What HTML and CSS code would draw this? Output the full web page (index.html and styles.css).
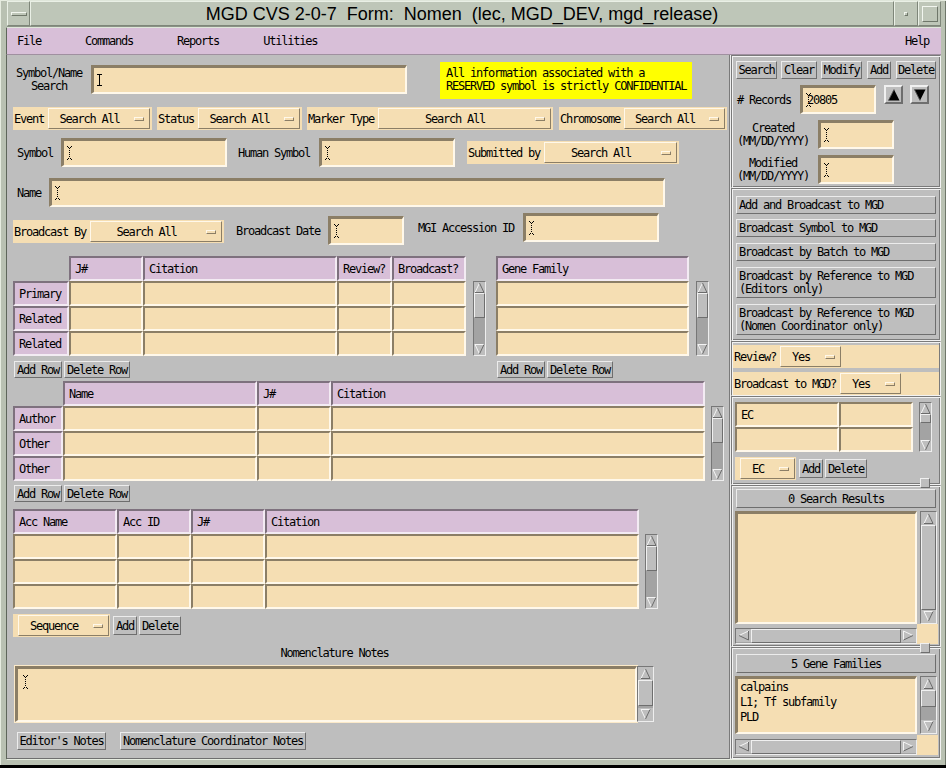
FILE: index.html
```html
<!DOCTYPE html>
<html><head><meta charset="utf-8"><title>MGD Nomen</title><link rel="stylesheet" href="styles.css"></head>
<body>
<svg class="defs" aria-hidden="true">
 <symbol id="su" viewBox="0 0 11 11"><path d="M5.5 1L1 10.5H10Z" fill="#bebebe"/><path d="M1 10.5L5.5 1" stroke="#f4f4f4" fill="none"/><path d="M5.5 1L10 10.5H1" stroke="#6a6a6a" fill="none"/></symbol>
 <symbol id="sd" viewBox="0 0 11 11"><path d="M1 0.5H10L5.5 10Z" fill="#bebebe"/><path d="M5.5 10L1 0.5H10" stroke="#f4f4f4" fill="none"/><path d="M10 0.5L5.5 10" stroke="#6a6a6a" fill="none"/></symbol>
 <symbol id="sl" viewBox="0 0 11 11"><path d="M1 5.5L10.5 1V10Z" fill="#bebebe"/><path d="M10.5 1L1 5.5" stroke="#f4f4f4" fill="none"/><path d="M1 5.5L10.5 10V1" stroke="#6a6a6a" fill="none"/></symbol>
 <symbol id="sr" viewBox="0 0 11 11"><path d="M10 5.5L0.5 1V10Z" fill="#bebebe"/><path d="M0.5 10V1L10 5.5" stroke="#f4f4f4" fill="none"/><path d="M10 5.5L0.5 10" stroke="#6a6a6a" fill="none"/></symbol>
 <symbol id="bu" viewBox="0 0 13 13"><path d="M6.5 0.5L0.5 12.5H12.5Z" fill="#000"/><path d="M6.5 0.5L0.5 12.5" stroke="#555" fill="none"/></symbol>
 <symbol id="bd" viewBox="0 0 13 13"><path d="M0.5 0.5H12.5L6.5 12.5Z" fill="#000"/><path d="M0.5 0.5L6.5 12.5" stroke="#555" fill="none"/></symbol>
 <symbol id="ibd" viewBox="0 0 5 14"><path d="M0 0.5h1M4 0.5h1M1 1.5h1M3 1.5h1M1 12.5h1M3 12.5h1M0 13.5h1M4 13.5h1" stroke="#000" fill="none"/><path d="M2.5 2v10" stroke="#000" stroke-dasharray="1 1" fill="none"/></symbol>
 <symbol id="ibs" viewBox="0 0 5 12"><path d="M0 0.5h5M2.5 1v10M0 11.5h5" stroke="#000" fill="none"/></symbol>
</svg>
<div class="win">
 <div class="titlebar">
  <div class="tbb tb-menu"><span class="tdash"></span></div>
  <div class="tb-title">MGD CVS 2-0-7&nbsp; Form:&nbsp; Nomen&nbsp; (lec, MGD_DEV, mgd_release)</div>
  <div class="tbb tb-min"><span class="tdot"></span></div>
  <div class="tbb tb-max"><span class="tsq"></span></div>
 </div>
 <div class="menubar">
  <span class="mi m-file">File</span><span class="mi m-cmd">Commands</span><span class="mi m-rep">Reports</span><span class="mi m-util">Utilities</span><span class="mi m-help">Help</span>
 </div>
 <div class="main">
  <div class="left">
   <div class="row r1">
    <div class="lbl l-ssearch">Symbol/Name<br>Search</div>
    <div class="fld f-ssearch"><svg class="curs"><use href="#ibs"/></svg></div>
    <div class="notice">All information associated with a<br>RESERVED symbol is strictly CONFIDENTIAL</div>
   </div>
   <div class="row r2">
    <div class="opt g-event"><span class="ol">Event</span><div class="ob"><span class="t">Search All</span><span class="ind"></span></div></div>
    <div class="opt g-status"><span class="ol">Status</span><div class="ob"><span class="t">Search All</span><span class="ind"></span></div></div>
    <div class="opt g-marker"><span class="ol">Marker Type</span><div class="ob"><span class="t">Search All</span><span class="ind"></span></div></div>
    <div class="opt g-chrom"><span class="ol">Chromosome</span><div class="ob"><span class="t">Search All</span><span class="ind"></span></div></div>
   </div>
   <div class="row r3">
    <div class="lbl l-symbol">Symbol</div>
    <div class="fld f-symbol"><svg class="cur"><use href="#ibd"/></svg></div>
    <div class="lbl l-human">Human Symbol</div>
    <div class="fld f-human"><svg class="cur"><use href="#ibd"/></svg></div>
    <div class="opt g-subm"><span class="ol">Submitted by</span><div class="ob"><span class="t">Search All</span><span class="ind"></span></div></div>
   </div>
   <div class="row r4">
    <div class="lbl l-name">Name</div>
    <div class="fld f-name"><svg class="cur"><use href="#ibd"/></svg></div>
   </div>
   <div class="row r5">
    <div class="opt g-bby"><span class="ol">Broadcast By</span><div class="ob"><span class="t">Search All</span><span class="ind"></span></div></div>
    <div class="lbl l-bdate">Broadcast Date</div>
    <div class="fld f-bdate"><svg class="cur"><use href="#ibd"/></svg></div>
    <div class="lbl l-mgi">MGI Accession ID</div>
    <div class="fld f-mgi"><svg class="cur"><use href="#ibd"/></svg></div>
   </div>

   <div class="row tb1">
    <div class="tcol c-t1">
     <div class="tbl t1">
      <div class="corner"></div><div class="hc">J#</div><div class="hc">Citation</div><div class="hc">Review?</div><div class="hc">Broadcast?</div>
      <div class="hc">Primary</div><div class="c"></div><div class="c"></div><div class="c"></div><div class="c"></div>
      <div class="hc">Related</div><div class="c"></div><div class="c"></div><div class="c"></div><div class="c"></div>
      <div class="hc">Related</div><div class="c"></div><div class="c"></div><div class="c"></div><div class="c"></div>
     </div>
     <div class="brow"><div class="btn b-addrow">Add Row</div><div class="btn b-delrow">Delete Row</div></div>
    </div>
    <div class="vsb vs-t1"><div class="sa"><svg><use href="#su"/></svg></div><div class="sth"></div><div class="str"></div><div class="sa"><svg><use href="#sd"/></svg></div></div>
    <div class="tcol c-gf">
     <div class="tbl tgf">
      <div class="hc">Gene Family</div><div class="c"></div><div class="c"></div><div class="c"></div>
     </div>
     <div class="brow"><div class="btn b-addrow">Add Row</div><div class="btn b-delrow">Delete Row</div></div>
    </div>
    <div class="vsb vs-gf"><div class="sa"><svg><use href="#su"/></svg></div><div class="sth"></div><div class="str"></div><div class="sa"><svg><use href="#sd"/></svg></div></div>
   </div>

   <div class="row tb2">
    <div class="tcol c-t2">
     <div class="tbl t2">
      <div class="corner"></div><div class="hc">Name</div><div class="hc">J#</div><div class="hc">Citation</div>
      <div class="hc">Author</div><div class="c"></div><div class="c"></div><div class="c"></div>
      <div class="hc">Other</div><div class="c"></div><div class="c"></div><div class="c"></div>
      <div class="hc">Other</div><div class="c"></div><div class="c"></div><div class="c"></div>
     </div>
     <div class="brow br2"><div class="btn b-addrow">Add Row</div><div class="btn b-delrow">Delete Row</div></div>
    </div>
    <div class="vsb vs-t2"><div class="sa"><svg><use href="#su"/></svg></div><div class="sth"></div><div class="str"></div><div class="sa"><svg><use href="#sd"/></svg></div></div>
   </div>

   <div class="row tb3">
    <div class="tbl t3">
     <div class="hc">Acc Name</div><div class="hc">Acc ID</div><div class="hc">J#</div><div class="hc">Citation</div>
     <div class="c"></div><div class="c"></div><div class="c"></div><div class="c"></div>
     <div class="c"></div><div class="c"></div><div class="c"></div><div class="c"></div>
     <div class="c"></div><div class="c"></div><div class="c"></div><div class="c"></div>
    </div>
    <div class="vsb vs-t3"><div class="sa"><svg><use href="#su"/></svg></div><div class="sth"></div><div class="str"></div><div class="sa"><svg><use href="#sd"/></svg></div></div>
   </div>

   <div class="row rseq">
    <div class="opt g-seq"><div class="ob"><span class="t">Sequence</span><span class="ind"></span></div></div>
    <div class="btn b-sadd">Add</div>
    <div class="btn b-sdel">Delete</div>
   </div>
   <div class="notes-lbl">Nomenclature Notes</div>
   <div class="row rnotes">
    <div class="ta"><svg class="cur"><use href="#ibd"/></svg></div>
    <div class="vsb vs-ta"><div class="sa"><svg><use href="#su"/></svg></div><div class="sth"></div><div class="str"></div><div class="sa"><svg><use href="#sd"/></svg></div></div>
   </div>
   <div class="row rbot">
    <div class="btn b-ed">Editor's Notes</div>
    <div class="btn b-nc">Nomenclature Coordinator Notes</div>
   </div>
  </div>

  <div class="right">
   <div class="sec s1">
    <div class="row rbtns">
     <div class="btn b-search">Search</div><div class="btn b-clear">Clear</div><div class="btn b-modify">Modify</div><div class="btn b-add">Add</div><div class="btn b-delete">Delete</div>
    </div>
    <div class="row rrec">
     <div class="lbl l-rec"># Records</div>
     <div class="fld f-rec"><svg class="cur"><use href="#ibd"/></svg><span class="recv">20805</span></div>
     <div class="abtn ab-up"><svg><use href="#bu"/></svg></div>
     <div class="abtn ab-dn"><svg><use href="#bd"/></svg></div>
    </div>
    <div class="row rdate">
     <div class="lbl l-date">Created<br>(MM/DD/YYYY)</div>
     <div class="fld f-date"><svg class="cur"><use href="#ibd"/></svg></div>
    </div>
    <div class="row rdate">
     <div class="lbl l-date">Modified<br>(MM/DD/YYYY)</div>
     <div class="fld f-date"><svg class="cur"><use href="#ibd"/></svg></div>
    </div>
   </div>
   <div class="sec s2">
    <div class="btn wb wb1">Add and Broadcast to MGD</div>
    <div class="btn wb wb2">Broadcast Symbol to MGD</div>
    <div class="btn wb wb3">Broadcast by Batch to MGD</div>
    <div class="btn wb wb4">Broadcast by Reference to MGD<br>(Editors only)</div>
    <div class="btn wb wb4">Broadcast by Reference to MGD<br>(Nomen Coordinator only)</div>
   </div>
   <div class="sec s3">
    <div class="opt g-review"><span class="ol">Review?</span><div class="ob"><span class="t">Yes</span><span class="ind"></span></div></div>
    <div class="opt g-bmgd"><span class="ol">Broadcast to MGD?</span><div class="ob"><span class="t">Yes</span><span class="ind"></span></div></div>
   </div>
   <div class="sec s4">
    <div class="row rec-tbl">
     <div class="tbl tec">
      <div class="c ct">EC</div><div class="c"></div>
      <div class="c"></div><div class="c"></div>
     </div>
     <div class="vsb vs-ec"><div class="sa"><svg><use href="#su"/></svg></div><div class="sth"></div><div class="str"></div><div class="sa"><svg><use href="#sd"/></svg></div></div>
    </div>
    <div class="row rec-opt">
     <div class="opt g-ec"><div class="ob"><span class="t">EC</span><span class="ind"></span></div></div>
     <div class="btn b-eadd">Add</div>
     <div class="btn b-edel">Delete</div>
    </div>
   </div>
   <div class="sec s5">
    <div class="btn pb pb1">0 Search Results</div>
    <div class="sw sw-res">
     <div class="list"></div>
     <div class="vsb rvsb vs-res"><div class="sa"><svg><use href="#su"/></svg></div><div class="sth"></div><div class="sa"><svg><use href="#sd"/></svg></div></div>
     <div class="hsb"><div class="sa"><svg><use href="#sl"/></svg></div><div class="sth"></div><div class="sa"><svg><use href="#sr"/></svg></div></div>
     <div class="swc"></div>
    </div>
   </div>
   <div class="sec s6">
    <div class="btn pb pb2">5 Gene Families</div>
    <div class="sw sw-gf">
     <div class="list">calpains<br>L1; Tf subfamily<br>PLD</div>
     <div class="vsb rvsb vs-gfl"><div class="sa"><svg><use href="#su"/></svg></div><div class="sth"></div><div class="str"></div><div class="sa"><svg><use href="#sd"/></svg></div></div>
     <div class="hsb"><div class="sa"><svg><use href="#sl"/></svg></div><div class="sth"></div><div class="sa"><svg><use href="#sr"/></svg></div></div>
     <div class="swc"></div>
    </div>
   </div>
   <div class="sash sash1"></div>
   <div class="sash sash2"></div>
  </div>
 </div>
 <div class="fbot"></div>
</div>
</body></html>
```

FILE: styles.css
```css
*{box-sizing:border-box}
html,body{margin:0;padding:0;background:#000}
body{width:946px;height:768px;overflow:hidden}
.defs{width:0;height:0;overflow:hidden;display:block}

.win{width:946px;height:765px;background:#b9c1b2;padding:0 5px 0 6px;display:flex;flex-direction:column;
 font-family:"DejaVu Sans Mono",monospace;font-size:12px;letter-spacing:-1.22px;color:#000;
 box-shadow:inset 1px 1px 0 #e6ece0,inset -1px 0 0 #6f776a}

/* title bar */
.titlebar{flex:none;height:27px;display:flex;margin-left:1px;background:#bec6b8;border-top:1px solid #dfe6da;border-bottom:1px solid #8a9285}
.tbb{flex:none;display:flex;align-items:center;justify-content:center;border:1px solid;border-color:#eaf0e6 #7e8679 #7e8679 #eaf0e6}
.tb-menu{width:23px}
.tb-min{width:24px}
.tb-max{width:23px}
.tb-title{flex:1;text-align:center;font-family:"Liberation Sans",Arial,sans-serif;font-size:18px;letter-spacing:0;line-height:24px;color:#000;
 border:1px solid;border-color:#eaf0e6 #7e8679 #7e8679 #eaf0e6;white-space:nowrap}
.tdash{width:16px;height:4px;border:1px solid;border-color:#f2f6ef #6f776a #6f776a #f2f6ef}
.tdot{width:4px;height:4px;border:1px solid;border-color:#f2f6ef #6f776a #6f776a #f2f6ef}
.tsq{width:16px;height:16px;border:1px solid;border-color:#f2f6ef #6f776a #6f776a #f2f6ef}

/* menu bar */
.menubar{flex:none;height:28px;display:flex;align-items:center;background:#d8bfd8;border-left:1px solid #5e665a;border-top:1px solid #dfe6da;border-bottom:1px solid #a090a0;padding-left:10px}
.mi{white-space:nowrap}
.m-cmd,.m-rep,.m-util{margin-left:44px}
.m-help{margin-left:auto;margin-right:12px}

/* main */
.main{flex:none;height:704px;display:flex;border-left:1px solid #5e665a}
.left{flex:none;width:723px;display:flex;flex-direction:column;background:#bebebe;border-right:1px solid #7a7a7a;border-bottom:1px solid #6e6e6e}
.right{flex:none;width:211px;position:relative;background:#bebebe;display:flex;flex-direction:column;border-left:1px solid #eeeeee}
.fbot{flex:none;height:6px;margin-left:1px;border-top:1px solid #e6ece0}

.row{display:flex;align-items:center;flex:none}
.lbl{flex:none;white-space:nowrap}

/* fields */
.fld{flex:none;display:flex;align-items:center;background:#f5deb3;border-style:solid;border-width:3px 2px 2px 3px;border-color:#8b7e66 #fff8ea #fff8ea #8b7e66;padding-left:3px}
.cur{flex:none;width:5px;height:14px}
.curs{flex:none;width:5px;height:12px}
.recv{margin-left:-4px}

/* option menus */
.opt{flex:none;display:flex;align-items:center;height:23px;background:#f5deb3;padding:0 2px 0 1px}
.ol{flex:none;white-space:nowrap}
.ob{flex:none;height:21px;display:flex;align-items:center;border:1px solid;border-color:#fff8ea #8b7e66 #8b7e66 #fff8ea}
.ob .t{flex:1;text-align:center;white-space:nowrap}
.ind{flex:none;width:10px;height:4px;margin:0 5px 0 4px;border:1px solid;border-color:#fff8ea #8b7e66 #8b7e66 #fff8ea}

/* buttons */
.btn{flex:none;display:flex;align-items:center;justify-content:center;background:#bebebe;border:1px solid;border-color:#ececec #6e6e6e #6e6e6e #ececec;white-space:nowrap}

/* tables */
.tbl{display:grid;grid-auto-rows:25px;flex:none}
.hc{background:#d8bfd8;border:2px solid;border-color:#7e717e #f3ebf3 #f3ebf3 #7e717e;padding-left:4px;display:flex;align-items:center;white-space:nowrap;overflow:hidden}
.c{background:#f5deb3;border:2px solid;border-color:#8b7e66 #fff8ea #fff8ea #8b7e66}
.ct{display:flex;align-items:center;padding-left:4px}
.t1{grid-template-columns:56px 74px 194px 55px 74px}
.tgf{grid-template-columns:193px}
.t2{grid-template-columns:50px 194px 74px 374px}
.t3{grid-template-columns:104px 74px 74px 374px;margin-left:6px}
.tec{grid-template-columns:104px 74px}
.tcol{flex:none;display:flex;flex-direction:column}
.brow{display:flex;gap:2px;margin-top:5px;margin-left:1px}
.br2{margin-top:4px}
.b-addrow{width:48px;height:17px}
.b-delrow{width:66px;height:17px}

/* scrollbars */
.vsb{flex:none;display:flex;flex-direction:column;border:1px solid;border-color:#777777 #eeeeee #eeeeee #777777;background:#a3a3a3}
.hsb{display:flex;border:1px solid;border-color:#777777 #eeeeee #eeeeee #777777;background:#a3a3a3}
.sa{flex:none;width:11px;height:11px;display:flex;align-items:center;justify-content:center;background:#bebebe}
.sa svg{width:11px;height:11px;display:block}
.sth{flex:none;height:25px;background:#bebebe;border:1px solid;border-color:#f0f0f0 #6e6e6e #6e6e6e #f0f0f0}
.str{flex:1}
.vs-t1,.vs-gf{width:13px;height:75px}
.vs-t1{margin-left:7px}
.vs-gf{margin-left:7px}
.tb1 .vsb{align-self:flex-start;margin-top:25px}
.tb2 .vsb{align-self:flex-start;margin-top:25px}
.tb3 .vsb{align-self:flex-start;margin-top:25px}
.c-gf{margin-left:10px}
.vs-t2{width:13px;height:75px;margin-left:6px}
.vs-t3{width:13px;height:75px;margin-left:6px}

/* left rows */
.r1{margin-top:7px;height:37px}
.l-ssearch{margin-left:9px;width:66px;text-align:center;line-height:13px;margin-top:-2px}
.f-ssearch{width:316px;height:29px;margin-left:9px;align-self:flex-start;margin-top:3px}
.notice{flex:none;margin-left:33px;width:252px;height:37px;background:#ffff00;padding:5px 0 0 6px;line-height:13px;white-space:nowrap}

.r2{margin-top:8px;height:23px}
.g-event{margin-left:6px}.g-event .ol{width:34px}.g-event .ob{width:102px}
.g-status{margin-left:5px}.g-status .ol{width:40px}.g-status .ob{width:102px}
.g-marker{margin-left:5px}.g-marker .ol{width:70px}.g-marker .ob{width:173px}
.g-chrom{margin-left:6px}.g-chrom .ol{width:64px}.g-chrom .ob{width:101px}

.r3{margin-top:8px;height:29px}
.l-symbol{margin-left:10px;width:44px}
.f-symbol{width:166px;height:29px}
.l-human{margin-left:11px;width:81px}
.f-human{width:136px;height:29px}
.g-subm{margin-left:12px}.g-subm .ol{width:76px}.g-subm .ob{width:133px}

.r4{margin-top:11px;height:29px}
.l-name{margin-left:10px;width:32px}
.f-name{width:616px;height:29px}

.r5{margin-top:6px;height:32px;align-items:flex-start}
.g-bby{margin-left:6px;margin-top:7px}.g-bby .ol{width:76px}.g-bby .ob{width:132px}
.l-bdate{margin-left:12px;width:92px;height:29px;margin-top:3px;display:flex;align-items:center}
.f-bdate{width:76px;height:29px;margin-top:3px}
.l-mgi{margin-left:14px;width:105px;height:29px;display:flex;align-items:center}
.f-mgi{width:136px;height:29px}

.tb1{margin-top:11px;align-items:flex-start}
.c-t1{margin-left:6px}
.tb2{margin-top:3px;align-items:flex-start}
.c-t2{margin-left:6px}
.tb3{margin-top:7px;align-items:flex-start}

.rseq{margin-top:5px;height:23px}
.g-seq{margin-left:6px;padding-left:5px;padding-right:1px}.g-seq .ob{width:91px}
.b-sadd{margin-left:3px;width:24px;height:19px}
.b-sdel{margin-left:2px;width:42px;height:19px}
.notes-lbl{flex:none;margin:9px 0 0 8px;width:639px;text-align:center;line-height:14px}
.rnotes{margin-top:6px;margin-left:8px;align-items:stretch;height:56px}
.ta{flex:none;width:622px;height:56px;background:#f5deb3;border-style:solid;border-width:3px 2px 2px 3px;border-color:#8b7e66 #fff8ea #fff8ea #8b7e66;padding:6px 0 0 5px;box-shadow:0 0 0 1px #fbe9c8}
.ta .cur{display:block}
.vs-ta{width:17px;height:56px;margin-left:0}
.vs-ta .sa,.rvsb .sa,.hsb .sa{width:15px;height:13px}
.vs-ta .sth{height:26px}
.rbot{margin-top:10px;margin-left:10px;height:18px}
.b-ed{width:89px;height:18px}
.b-nc{margin-left:14px;width:186px;height:18px}

/* right panel */
.sec{flex:none;border:1px solid;border-color:#7a7a7a #f2f2f2 #f2f2f2 #7a7a7a;box-shadow:inset 1px 1px 0 #f2f2f2,inset -1px -1px 0 #7a7a7a;display:flex;flex-direction:column}
.s1{height:133px;padding-left:4px}
.s2{height:153px;padding-left:4px}
.s3{height:55px}
.s4{height:89px}
.s5{height:162px}
.s6{height:112px}

.rbtns{margin-top:5px;height:18px}
.rbtns .btn{height:18px}
.b-search{width:41px}
.b-clear{width:36px;margin-left:4px}
.b-modify{width:41px;margin-left:4px}
.b-add{width:24px;margin-left:5px}
.b-delete{width:40px;margin-left:5px}
.rrec{margin-top:6px;height:29px;align-items:flex-start}
.l-rec{margin-left:1px;width:63px;height:29px;display:flex;align-items:center}
.f-rec{width:76px;height:29px}
.abtn{flex:none;width:19px;height:19px;background:#bebebe;border:2px solid;border-color:#f0f0f0 #6e6e6e #6e6e6e #f0f0f0;display:flex;align-items:center;justify-content:center}
.abtn svg{width:12px;height:12px;display:block}
.ab-up{margin-left:8px}
.ab-dn{margin-left:7px}
.rdate{margin-top:6px;height:29px}
.l-date{width:74px;text-align:center;line-height:13px}
.f-date{width:76px;height:29px;margin-left:8px}

.wb{width:200px;justify-content:flex-start;padding-left:2px;height:18px;margin-top:6px}
.wb1{margin-top:7px}
.wb2{margin-top:5px}
.wb4{height:31px;line-height:13px}

.g-review{margin-left:1px;margin-top:3px;width:206px}.g-review .ol{width:46px}.g-review .ob{width:61px}
.g-bmgd{margin-left:1px;margin-top:4px;width:206px}.g-bmgd .ol{width:106px}.g-bmgd .ob{width:61px}

.rec-tbl{margin-top:5px;margin-left:3px;align-items:flex-start}
.vs-ec{width:13px;height:50px;margin-left:6px}
.vs-ec .sth{height:9px}
.rec-opt{margin-top:5px;height:23px}
.g-ec{margin-left:3px;padding-left:5px;padding-right:1px}.g-ec .ob{width:55px}
.b-eadd{margin-left:3px;width:24px;height:19px}
.b-edel{margin-left:2px;width:42px;height:19px}

.pb{margin-left:4px;width:200px;height:19px}
.pb1{margin-top:3px}
.pb2{margin-top:6px}
.sw{display:grid;grid-template-columns:182px 17px;column-gap:3px;margin-left:3px;margin-top:3px}
.sw-res{grid-template-rows:113px 16px;row-gap:4px}
.sw-gf{grid-template-rows:58px 16px;row-gap:5px}
.list{background:#f5deb3;border-style:solid;border-width:3px 2px 2px 3px;border-color:#8b7e66 #fff8ea #fff8ea #8b7e66;padding:1px 2px;line-height:15px;white-space:nowrap;overflow:hidden}
.swc{background:#f5deb3;margin:-4px -1px 0 -3px}
.rvsb{height:100%}
.vs-res .sth{flex:1}
.vs-gfl .sth{height:17px}
.hsb .sth{flex:1;height:auto}
.sash{position:absolute;left:189px;width:10px;height:10px;background:#bebebe;border:1px solid;border-color:#f0f0f0 #6e6e6e #6e6e6e #f0f0f0}
.sash1{top:423px}
.sash2{top:588px}
```
